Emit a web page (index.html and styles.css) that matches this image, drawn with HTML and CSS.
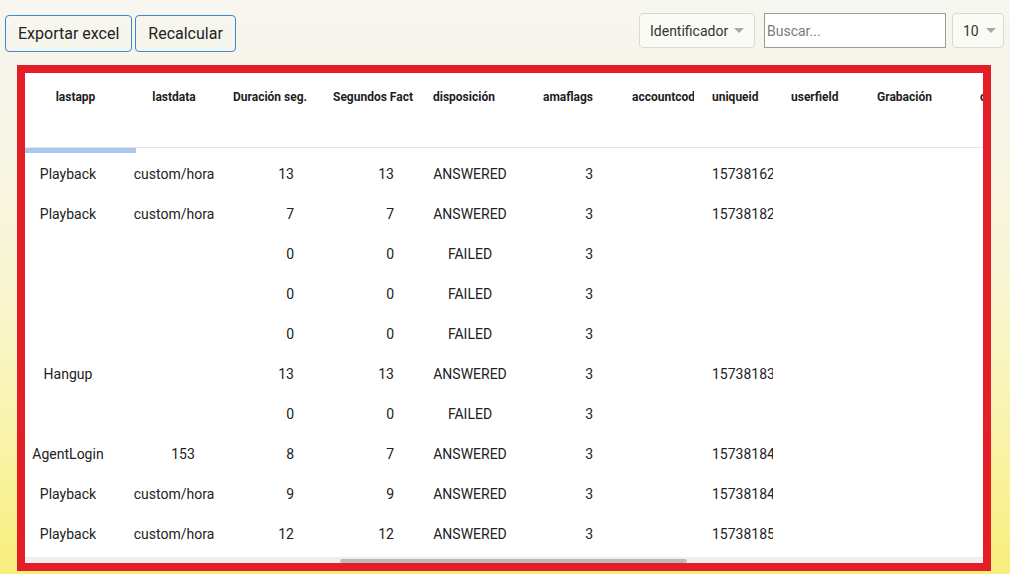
FILE: index.html
```html
<!DOCTYPE html>
<html lang="es">
<head>
<meta charset="utf-8">
<title>Registros</title>
<link rel="stylesheet" href="styles.css">
</head>
<body>
<div class="toolbar">
  <div class="actions">
    <button class="btn">Exportar excel</button>
    <button class="btn">Recalcular</button>
  </div>
  <div class="filters">
    <div class="select sel-field"><span>Identificador</span><i class="caret"></i></div>
    <div class="search"><span class="ph">Buscar...</span></div>
    <div class="select sel-size"><span>10</span><i class="caret"></i></div>
  </div>
</div>

<div class="panel">
  <div class="viewport">
    <div class="grid">
      <div class="row head">
        <div class="c c1">lastapp</div>
        <div class="c c2">lastdata</div>
        <div class="c c3">Duración seg.</div>
        <div class="c c4">Segundos Fact</div>
        <div class="c c5">disposición</div>
        <div class="c c6">amaflags</div>
        <div class="c c7">accountcode</div>
        <div class="c c8">uniqueid</div>
        <div class="c c9">userfield</div>
        <div class="c c10">Grabación</div>
        <div class="c c11">calidad</div>
      </div>
      <div class="progress"><div class="progress-bar"></div></div>

      <div class="row">
        <div class="c c1">Playback</div><div class="c c2">custom/hora</div><div class="c c3">13</div><div class="c c4">13</div><div class="c c5">ANSWERED</div><div class="c c6">3</div><div class="c c7"></div><div class="c c8">1573816246.512</div><div class="c c9"></div><div class="c c10"></div><div class="c c11"></div>
      </div>
      <div class="row">
        <div class="c c1">Playback</div><div class="c c2">custom/hora</div><div class="c c3">7</div><div class="c c4">7</div><div class="c c5">ANSWERED</div><div class="c c6">3</div><div class="c c7"></div><div class="c c8">1573818246.518</div><div class="c c9"></div><div class="c c10"></div><div class="c c11"></div>
      </div>
      <div class="row">
        <div class="c c1"></div><div class="c c2"></div><div class="c c3">0</div><div class="c c4">0</div><div class="c c5">FAILED</div><div class="c c6">3</div><div class="c c7"></div><div class="c c8"></div><div class="c c9"></div><div class="c c10"></div><div class="c c11"></div>
      </div>
      <div class="row">
        <div class="c c1"></div><div class="c c2"></div><div class="c c3">0</div><div class="c c4">0</div><div class="c c5">FAILED</div><div class="c c6">3</div><div class="c c7"></div><div class="c c8"></div><div class="c c9"></div><div class="c c10"></div><div class="c c11"></div>
      </div>
      <div class="row">
        <div class="c c1"></div><div class="c c2"></div><div class="c c3">0</div><div class="c c4">0</div><div class="c c5">FAILED</div><div class="c c6">3</div><div class="c c7"></div><div class="c c8"></div><div class="c c9"></div><div class="c c10"></div><div class="c c11"></div>
      </div>
      <div class="row">
        <div class="c c1">Hangup</div><div class="c c2"></div><div class="c c3">13</div><div class="c c4">13</div><div class="c c5">ANSWERED</div><div class="c c6">3</div><div class="c c7"></div><div class="c c8">1573818354.530</div><div class="c c9"></div><div class="c c10"></div><div class="c c11"></div>
      </div>
      <div class="row">
        <div class="c c1"></div><div class="c c2"></div><div class="c c3">0</div><div class="c c4">0</div><div class="c c5">FAILED</div><div class="c c6">3</div><div class="c c7"></div><div class="c c8"></div><div class="c c9"></div><div class="c c10"></div><div class="c c11"></div>
      </div>
      <div class="row">
        <div class="c c1">AgentLogin</div><div class="c c2 shift">153</div><div class="c c3">8</div><div class="c c4">7</div><div class="c c5">ANSWERED</div><div class="c c6">3</div><div class="c c7"></div><div class="c c8">1573818403.541</div><div class="c c9"></div><div class="c c10"></div><div class="c c11"></div>
      </div>
      <div class="row">
        <div class="c c1">Playback</div><div class="c c2">custom/hora</div><div class="c c3">9</div><div class="c c4">9</div><div class="c c5">ANSWERED</div><div class="c c6">3</div><div class="c c7"></div><div class="c c8">1573818476.549</div><div class="c c9"></div><div class="c c10"></div><div class="c c11"></div>
      </div>
      <div class="row">
        <div class="c c1">Playback</div><div class="c c2">custom/hora</div><div class="c c3">12</div><div class="c c4">12</div><div class="c c5">ANSWERED</div><div class="c c6">3</div><div class="c c7"></div><div class="c c8">1573818557.556</div><div class="c c9"></div><div class="c c10"></div><div class="c c11"></div>
      </div>
    </div>
  </div>
  <div class="hscroll"><div class="thumb"></div></div>
</div>
</body>
</html>
```

FILE: styles.css
```css
* { box-sizing: border-box; }

html, body {
  margin: 0;
  padding: 0;
  height: 100%;
}

body {
  width: 1010px;
  height: 574px;
  overflow: hidden;
  font-family: Roboto, "Liberation Sans", Arial, sans-serif;
  color: #222;
  background: linear-gradient(180deg, #f7f6f0 0%, #f7f5e6 25%, #f9f6d2 50%, #f9f3a6 78%, #f8ef7c 100%);
}

/* ---------- toolbar ---------- */
.toolbar {
  height: 52px;
  display: flex;
  justify-content: space-between;
  align-items: flex-start;
  padding: 13px 6px 0 5px;
}

.actions {
  display: flex;
  gap: 3px;
  margin-top: 2px;
}

.btn {
  height: 37px;
  padding: 0 12px;
  border: 1px solid #3f86cc;
  border-radius: 4px;
  background: transparent;
  font-family: Roboto, "Liberation Sans", Arial, sans-serif;
  font-size: 16px;
  color: #222;
}

.filters {
  display: flex;
  align-items: flex-start;
}

.select {
  height: 35px;
  display: flex;
  align-items: center;
  gap: 6px;
  padding: 0 9px 0 10px;
  border: 1px solid #d9d9d4;
  border-radius: 4px;
  background: #fbfbf6;
  font-size: 14px;
  color: #333;
}

.sel-field { width: 116px; }
.sel-size { width: 52px; margin-left: 6px; gap: 7px; }

.caret {
  width: 0;
  height: 0;
  border-left: 5px solid transparent;
  border-right: 5px solid transparent;
  border-top: 5px solid #a8a8a8;
}

.search {
  width: 182px;
  height: 35px;
  margin-left: 9px;
  display: flex;
  align-items: center;
  padding-left: 2px;
  border: 1px solid #9a9a9a;
  background: #fff;
  font-size: 14px;
}

.ph { color: #7a7a7a; }

/* ---------- panel ---------- */
.panel {
  margin: 13px 0 0 17px;
  width: 974px;
  height: 506px;
  border: 8px solid #e41e26;
  background: #fff;
  display: flex;
  flex-direction: column;
}

.viewport {
  height: 481px;
  overflow: hidden;
}

.grid {
  width: 1075px;
}

.row {
  display: flex;
  height: 40px;
  line-height: 40px;
  font-size: 14px;
  color: #222;
}

.row.head {
  height: 75px;
  line-height: 16px;
  padding-top: 16px;
  border-bottom: 1px solid #e3e3e3;
  font-size: 12px;
  font-weight: bold;
  color: #1e1e1e;
}

.c {
  flex: none;
  white-space: nowrap;
  overflow: hidden;
  text-overflow: clip;
}

.c1 { width: 90px; text-align: center; padding: 0 4px 0 0; }
.c2 { width: 110px; text-align: center; padding-left: 8px; }
.c3 { width: 100px; text-align: right; padding-right: 31px; }
.c4 { width: 100px; text-align: right; padding-right: 31px; }
.c5 { width: 110px; text-align: center; padding: 0 28px 0 8px; }
.c6 { width: 89px; text-align: right; padding-right: 31px; }
.c7 { width: 70px; margin-right: 10px; padding-left: 8px; }
.c8 { width: 69px; margin-right: 10px; padding-left: 8px; }
.c9 { width: 86px; padding-left: 8px; }
.c10 { width: 103px; padding-left: 8px; }
.c11 { width: 128px; padding-left: 8px; }

.head .c { text-align: left; padding-left: 8px; padding-right: 0; }
.head .c1 { text-align: center; padding-left: 15px; padding-right: 4px; }
.head .c2 { text-align: center; }
.head .c6 { text-align: right; padding-right: 31px; }

.shift { padding-left: 26px; }

.progress {
  height: 6px;
}

.progress-bar {
  width: 111px;
  height: 5px;
  background: #a9c8ec;
}

/* ---------- horizontal scrollbar ---------- */
.hscroll {
  margin-top: 3px;
  height: 6px;
  background: #efefef;
  display: flex;
  align-items: flex-end;
}

.thumb {
  margin-left: 315px;
  width: 347px;
  height: 4px;
  background: #b9b9b9;
  border-radius: 2px;
}
```
